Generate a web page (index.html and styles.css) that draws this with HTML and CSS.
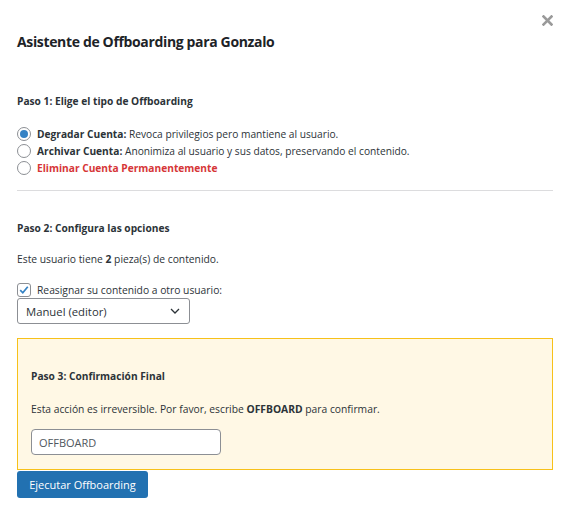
FILE: index.html
```html
<!DOCTYPE html>
<html lang="es">
<head>
<meta charset="utf-8">
<title>Asistente de Offboarding</title>
<link rel="stylesheet" href="styles.css">
</head>
<body>
<div class="modal">
  <button class="close" aria-label="Cerrar">
    <svg width="11" height="11" viewBox="0 0 11 11"><path d="M1.5 1.5 L9.5 9.5 M9.5 1.5 L1.5 9.5" stroke="#9a9a9a" stroke-width="2.6" stroke-linecap="square"/></svg>
  </button>
  <h2 class="title">Asistente de Offboarding para Gonzalo</h2>

  <h4 class="step">Paso 1: Elige el tipo de Offboarding</h4>
  <div class="radios">
    <label class="opt"><input type="radio" name="tipo" checked><span><strong>Degradar Cuenta:</strong> Revoca privilegios pero mantiene al usuario.</span></label>
    <label class="opt"><input type="radio" name="tipo"><span><strong>Archivar Cuenta:</strong> Anonimiza al usuario y sus datos, preservando el contenido.</span></label>
    <label class="opt danger"><input type="radio" name="tipo"><span><strong>Eliminar Cuenta Permanentemente</strong></span></label>
  </div>

  <hr class="sep">

  <h4 class="step step2">Paso 2: Configura las opciones</h4>
  <p class="text">Este usuario tiene <strong>2</strong> pieza(s) de contenido.</p>
  <label class="check"><input type="checkbox" checked><span>Reasignar su contenido a otro usuario:</span></label>
  <div class="select">
    <span>Manuel (editor)</span>
    <svg width="10" height="6" viewBox="0 0 10 6"><path d="M1 1 L5 5 L9 1" fill="none" stroke="#2c3338" stroke-width="1.3"/></svg>
  </div>

  <div class="confirm">
    <h4 class="step">Paso 3: Confirmación Final</h4>
    <p class="text">Esta acción es irreversible. Por favor, escribe <strong>OFFBOARD</strong> para confirmar.</p>
    <input class="field" type="text" value="OFFBOARD">
  </div>
  <button class="primary">Ejecutar Offboarding</button>
</div>
</body>
</html>
```
FILE: styles.css
```css
html, body {
  margin: 0;
  padding: 0;
  background: #ffffff;
}
body {
  font-family: "Open Sans", "Noto Sans", sans-serif;
  color: #2c3338;
  font-size: 10.3px;
}
.modal {
  position: relative;
  padding: 32px 17px 0;
  width: 536px;
}
.close {
  position: absolute;
  top: 15px;
  right: 17px;
  border: 0;
  background: none;
  padding: 0;
  width: 11px;
  height: 11px;
  display: flex;
}
.title {
  margin: 0;
  font-size: 14px;
  letter-spacing: -0.35px;
  line-height: 20px;
  font-weight: 700;
  color: #1d2327;
}
.step {
  margin: 41px 0 0;
  font-size: 10.2px;
  line-height: 16px;
  font-weight: 700;
  color: #2c3338;
}
.radios {
  margin-top: 16px;
  display: flex;
  flex-direction: column;
}
.opt {
  display: flex;
  align-items: center;
  height: 17px;
  gap: 6px;
  font-size: 10.2px;
}
.opt strong { font-weight: 700; }
.danger { color: #d63638; }
input[type="radio"] {
  appearance: none;
  margin: 0;
  width: 14px;
  height: 14px;
  border: 1px solid #8c8f94;
  border-radius: 50%;
  background: #fff;
  display: grid;
  place-items: center;
  flex: none;
}
input[type="radio"]:checked::before {
  content: "";
  width: 8px;
  height: 8px;
  border-radius: 50%;
  background: #3582c4;
}
.sep {
  margin: 14px 0 0;
  border: 0;
  border-top: 1px solid #dcdcde;
  height: 0;
}
.step2 { margin-top: 29px; }
.text {
  margin: 15px 0 0;
  font-size: 10.3px;
  line-height: 16px;
}
.check {
  margin-top: 15px;
  display: flex;
  align-items: center;
  gap: 6px;
  height: 16px;
  font-size: 10.3px;
}
input[type="checkbox"] {
  appearance: none;
  margin: 0;
  width: 14px;
  height: 14px;
  border: 1px solid #8c8f94;
  border-radius: 3px;
  background: #fff url("data:image/svg+xml;utf8,<svg xmlns='http://www.w3.org/2000/svg' viewBox='0 0 14 14'><path d='M2.6 7.2 L5.6 10.2 L11.4 3.2' fill='none' stroke='%233582c4' stroke-width='2'/></svg>") center/12px 12px no-repeat;
  flex: none;
}
.select {
  box-sizing: border-box;
  width: 173px;
  height: 26px;
  border: 1px solid #8c8f94;
  border-radius: 3px;
  display: flex;
  align-items: center;
  justify-content: space-between;
  padding: 0 9px 0 8px;
  font-size: 11.3px;
  color: #2c3338;
}
.confirm {
  margin-top: 14px;
  background: #fff8e5;
  border: 1px solid #f7c11a;
  padding: 29px 13px 14px;
}
.confirm .step { margin-top: 0; }
.confirm .text { margin-top: 17px; }
.field {
  display: block;
  box-sizing: border-box;
  margin-top: 12px;
  width: 190px;
  height: 26px;
  border: 1px solid #8c8f94;
  border-radius: 4px;
  padding: 0 7px;
  font-family: inherit;
  font-size: 11px;
  color: #50575e;
  background: #fff;
}
.primary {
  display: block;
  box-sizing: border-box;
  margin-top: 1px;
  height: 27px;
  width: 131px;
  border: 0;
  border-radius: 3px;
  background: #2271b1;
  color: #ffffff;
  font-family: inherit;
  font-size: 11px;
  padding: 0;
}
```
